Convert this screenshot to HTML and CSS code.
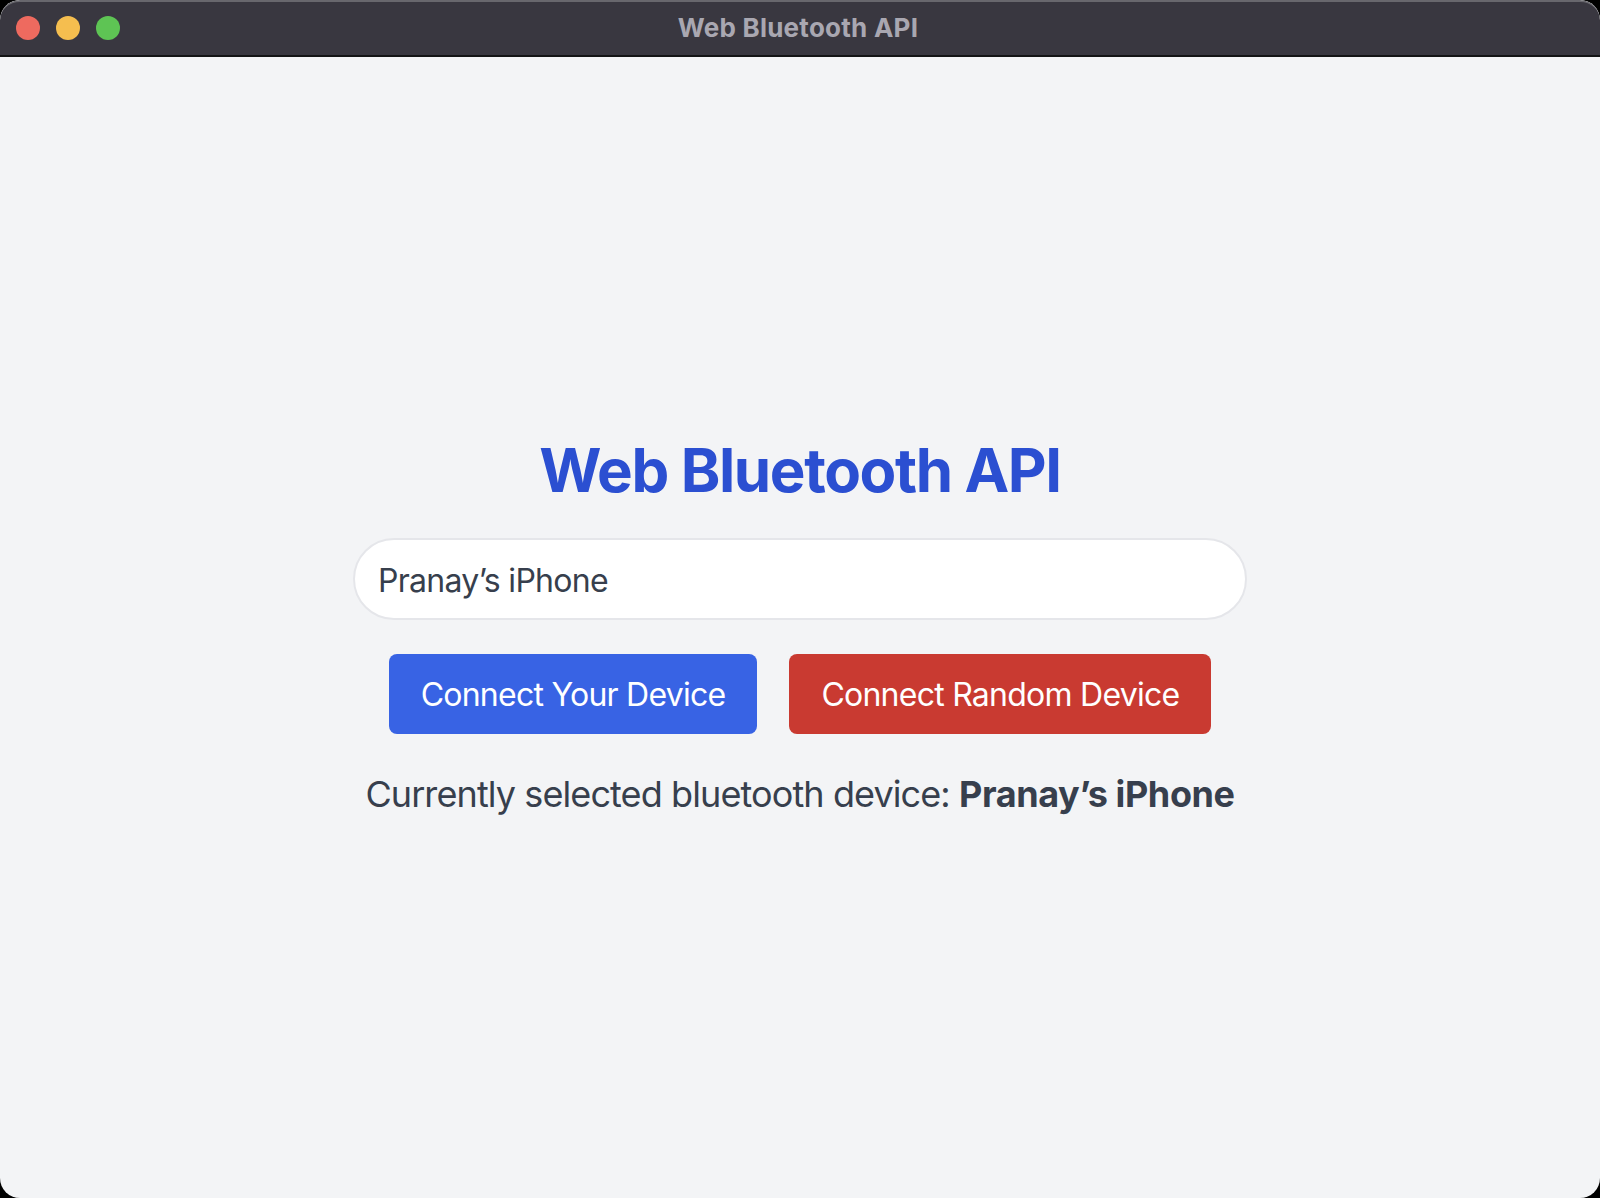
FILE: index.html
```html
<!DOCTYPE html>
<html lang="en">
<head>
<meta charset="utf-8">
<title>Web Bluetooth API</title>
<link rel="stylesheet" href="styles.css">
</head>
<body>
<div class="window">
  <header class="titlebar">
    <div class="lights">
      <span class="light red"></span>
      <span class="light yellow"></span>
      <span class="light green"></span>
    </div>
    <div class="title">Web Bluetooth API</div>
  </header>
  <main class="content">
    <h1 class="heading">Web Bluetooth API</h1>
    <input class="device-input" type="text" value="Pranay’s iPhone">
    <div class="actions">
      <button class="btn btn-blue">Connect Your Device</button>
      <button class="btn btn-red">Connect Random Device</button>
    </div>
    <p class="status">Currently selected bluetooth device: <strong>Pranay’s iPhone</strong></p>
  </main>
</div>
</body>
</html>
```

FILE: styles.css
```css
* { box-sizing: border-box; }
html, body {
  margin: 0;
  padding: 0;
  background: #000;
  height: 1198px;
  overflow: hidden;
}
.window {
  width: 1600px;
  height: 1198px;
  border-radius: 20px;
  overflow: hidden;
  background: #f3f4f6;
  display: flex;
  flex-direction: column;
  font-family: Inter, "Noto Sans", sans-serif;
}
.titlebar {
  position: relative;
  height: 57px;
  flex: none;
  background: #393740;
  border-top: 2px solid #68676d;
  border-bottom: 2px solid #141416;
  border-radius: 20px 20px 0 0;
  display: flex;
  align-items: center;
  justify-content: center;
}
.lights {
  position: absolute;
  left: 16px;
  top: 14px;
  display: flex;
  gap: 16px;
}
.light {
  width: 24px;
  height: 24px;
  border-radius: 50%;
  display: block;
}
.red { background: #ee6a5f; }
.yellow { background: #f5be4f; }
.green { background: #5ec454; }
.title {
  color: #a9a7b1;
  font-size: 26px;
  font-weight: 700;
  line-height: 32px;
  letter-spacing: 0.25px;
  margin: -2px 4px 0 0;
}
.content {
  flex: 1;
  display: flex;
  flex-direction: column;
  align-items: center;
  justify-content: center;
}
.heading {
  margin: 0 0 32px;
  font-size: 60px;
  line-height: 72px;
  font-weight: 700;
  color: #2b4fd1;
  letter-spacing: -1.4px;
}
.device-input {
  width: 894px;
  height: 82px;
  margin: 0 0 34px;
  padding: 18px 23px 14px;
  border: 2px solid #e5e6ea;
  border-radius: 41px;
  background: #fff;
  font-family: Inter, "Noto Sans", sans-serif;
  font-size: 32px;
  line-height: 48px;
  letter-spacing: -0.7px;
  color: #373f4d;
  outline: none;
}
.actions {
  display: flex;
  gap: 32px;
  margin-bottom: 32px;
}
.btn {
  height: 80px;
  padding: 17px 32px 15px;
  border: none;
  border-radius: 8px;
  font-family: Inter, "Noto Sans", sans-serif;
  font-size: 32px;
  line-height: 48px;
  letter-spacing: -0.75px;
  color: #fff;
}
.btn-blue { background: #3863e4; }
.btn-red { background: #c93a31; }
.status {
  margin: 0;
  font-size: 36px;
  line-height: 56px;
  letter-spacing: -0.9px;
  color: #373f4d;
}
.status strong { font-weight: 700; letter-spacing: -0.4px; }
```
